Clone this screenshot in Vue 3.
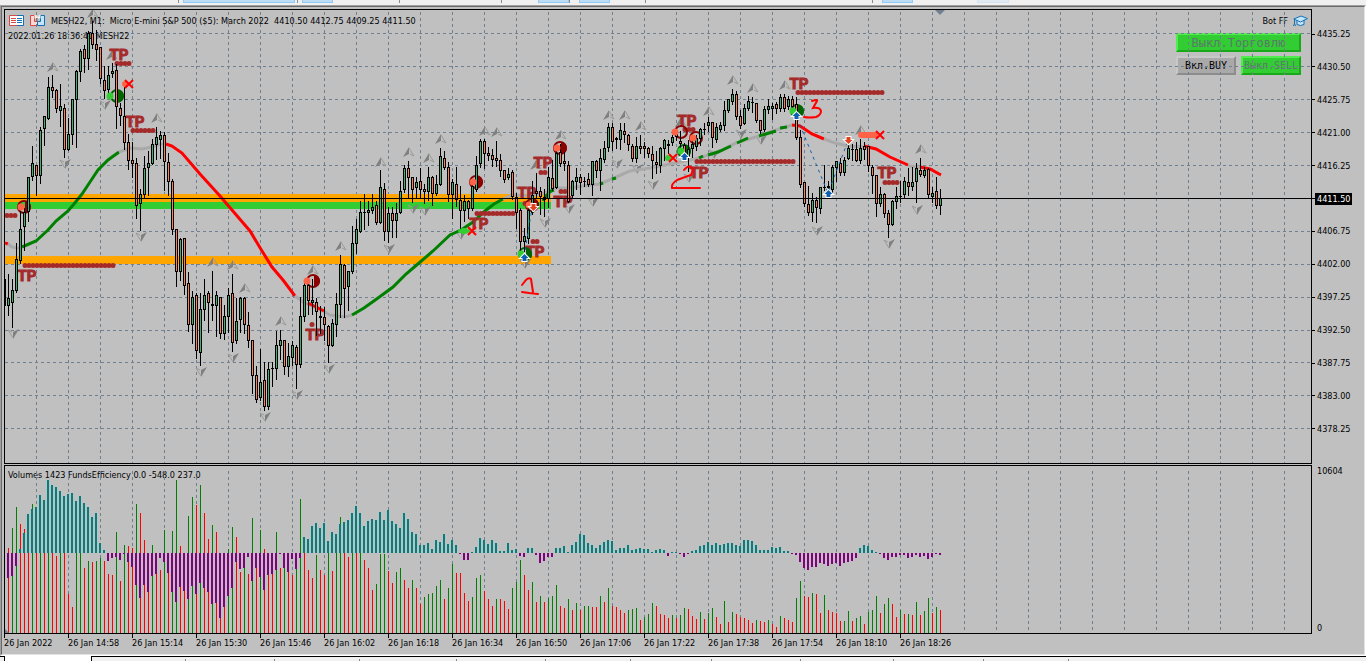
<script setup>
const STEP = 4
const FIRST_X = 8

// high, body top, body bottom, low, direction (u = up, d = down)
const candleData = `274 298 306 315 u,279 290 303 327 u,243 259 291 292 u,211 229 261 263 u,208 212 227 250 u,177 177 212 221 u,
146 163 177 180 u,165 165 176 195 d,127 130 176 183 u,116 116 129 145 u,77 87 119 119 u,75 87 91 97 d,89 90 109 112 d,
84 106 111 126 u,104 108 150 157 d,118 134 150 150 u,99 99 135 144 u,70 71 100 147 u,49 51 72 81 u,45 49 59 72 d,
31 33 59 69 u,21 33 45 48 d,30 44 50 60 d,47 47 79 83 d,66 80 91 98 d,66 75 90 93 u,63 71 74 77 u,64 70 107 128 d,
103 108 116 125 d,87 116 143 149 d,134 142 161 169 d,142 160 164 177 d,158 163 206 218 d,189 194 204 230 u,
156 168 195 197 u,151 163 168 195 u,139 144 164 164 u,127 137 145 159 u,131 135 140 158 u,132 135 162 190 d,
153 162 182 195 d,179 181 230 234 d,229 229 272 286 d,238 239 272 280 u,238 238 286 294 d,272 283 325 331 d,
291 297 325 343 u,293 295 351 358 d,293 309 353 365 u,279 295 310 320 u,291 293 303 332 d,271 304 306 320 d,
291 295 306 336 u,297 297 334 338 d,305 316 334 339 u,288 295 317 332 u,274 293 343 351 d,298 321 341 343 u,
297 298 320 332 u,297 298 325 333 d,312 325 341 347 d,340 340 376 393 d,366 375 400 402 d,349 382 398 400 u,
362 380 407 410 d,362 369 407 409 u,362 368 369 386 d,331 345 369 379 u,330 340 346 359 u,340 340 367 374 d,
343 356 367 376 u,341 345 358 365 u,345 347 365 388 d,297 316 365 367 u,283 285 317 321 u,283 285 301 314 d,
279 300 303 314 u,298 302 312 335 d,306 316 318 333 d,307 317 325 340 d,325 326 346 362 d,319 323 346 346 u,
293 304 325 336 u,255 264 305 317 u,264 265 289 317 d,271 271 287 310 u,226 243 272 273 u,219 229 244 253 u,
201 212 232 232 u,194 212 213 229 u,201 210 213 225 u,194 207 211 213 u,201 205 223 224 d,170 187 223 223 u,
183 189 232 240 d,207 213 232 242 u,207 213 221 237 d,203 213 221 237 u,181 191 213 213 u,165 168 190 192 u,
161 168 178 198 d,177 177 190 202 d,177 182 188 197 u,168 181 190 198 d,184 189 192 203 d,167 177 192 200 u,
176 177 194 205 d,175 184 194 195 u,148 156 185 185 u,151 158 168 169 d,162 167 195 201 d,179 182 195 218 u,
167 184 200 206 d,186 200 211 228 d,195 201 211 221 u,200 201 209 218 d,185 186 209 210 u,156 165 190 191 u,
139 141 164 167 u,139 141 154 168 d,147 153 156 160 d,149 155 160 166 d,141 158 161 166 d,154 160 171 176 d,
170 170 180 182 d,168 174 178 179 u,170 172 197 199 d,193 197 213 228 d,208 210 242 252 d,228 236 242 251 u,
208 210 239 243 u,181 195 213 214 u,173 191 194 197 d,187 191 197 214 d,189 197 200 216 d,167 177 199 207 u,
160 178 189 190 d,148 153 188 188 u,144 152 164 166 d,152 161 164 170 d,161 165 202 202 d,180 181 196 197 u,
168 177 182 189 u,174 177 183 194 d,177 181 182 186 d,173 179 185 186 d,161 161 185 195 u,160 161 171 177 d,
149 158 171 190 u,141 148 160 162 u,123 127 148 151 u,123 127 142 150 d,137 138 140 148 d,123 130 140 149 u,
123 131 135 142 d,134 135 145 150 d,144 146 159 161 d,137 146 159 162 u,135 146 149 153 d,142 146 149 157 d,
147 148 154 157 d,146 154 161 178 d,151 162 165 173 d,147 148 166 172 u,139 140 149 160 u,140 144 146 153 d,
135 137 143 145 u,132 133 137 140 d,131 141 144 148 d,143 145 157 160 d,140 149 157 171 u,141 144 149 157 u,
135 138 147 150 u,128 129 139 145 u,123 129 130 134 u,117 122 126 131 u,122 122 138 147 d,123 127 140 142 u,
122 125 130 131 u,101 110 126 130 u,99 99 111 112 u,89 94 102 104 u,91 94 117 119 d,110 116 126 128 d,
104 108 124 124 u,96 101 109 110 u,97 102 103 112 d,103 103 121 122 d,120 120 131 133 d,106 109 130 131 u,
99 106 110 113 u,103 106 109 119 u,102 104 109 113 d,94 97 109 111 u,94 97 109 111 d,96 99 107 109 u,96 99 107 109 d,
97 104 138 139 d,130 137 185 187 d,182 182 204 206 d,186 204 213 215 d,193 200 213 221 u,197 200 208 222 d,
187 187 209 213 u,165 187 188 190 d,181 186 188 194 d,165 167 190 194 u,161 161 168 181 u,158 163 173 175 d,
157 160 173 175 u,142 148 159 159 u,144 149 150 160 d,142 149 161 161 d,139 148 161 163 u,142 146 150 159 d,
146 146 166 171 d,165 167 176 193 d,175 175 204 216 d,187 194 204 206 u,193 194 214 217 d,210 213 225 237 d,
200 201 225 225 u,187 196 202 208 u,181 196 197 202 d,177 181 195 197 u,168 182 187 195 d,167 182 187 190 u,
163 168 182 202 u,158 170 175 176 d,167 170 176 177 u,168 169 195 198 d,187 193 197 202 u,177 191 206 208 d,
189 198 206 214 u`

const candles = candleData.split(',').map((row, i) => {
  const [h, t, b, l, d] = row.trim().split(' ')
  return { x: FIRST_X + i * STEP, h: +h, t: +t, b: +b, l: +l, up: d === 'u' }
})

// direction + volume level / efficiency level, three levels to a pixel
const volumeData = `r264/355 g204/348 g141/318 r192/267 r207/219 r279/162 g132/147 r279/141 g279/105 r279/120 g279/60 r279/75
r288/81 g279/93 r279/108 r402/102 r441/99 g279/123 g279/108 r324/129 g303/141 r306/171 g303/159 g294/249 r303/270
r342/303 r345/294 g216/291 r363/300 g255/282 r258/306 r264/321 g132/375 r159/414 r240/375 r396/396 g255/348 r342/342
r330/294 g210/306 r339/339 g213/396 g60/426 r258/381 r393/393 g168/417 g111/378 r135/402 g75/369 r159/384 r237/396
g195/432 r216/429 r474/474 r441/441 g267/408 g201/384 r231/306 r336/327 g324/324 r342/291 g174/363 r324/324 g210/351
r267/390 r345/345 r342/342 g216/330 r324/282 g324/324 r336/336 r345/297 g327/327 g117/294 r279/231 r330/237 r354/198
g285/189 r330/204 r345/189 g279/243 r333/216 g279/222 g171/192 r279/186 r291/180 g279/159 r279/138 g279/159 r300/198
r324/183 r390/177 g372/180 g282/156 g282/180 r333/150 r369/183 g336/192 g324/204 r360/159 r384/177 g360/216 r384/222
r432/255 g411/255 g402/249 g399/267 g378/240 g360/246 r417/222 g384/252 g312/240 r339/255 r339/282 r399/300 r423/300
g411/276 g354/261 g345/234 r393/240 r417/252 r438/240 g417/249 r417/273 r423/273 r447/249 g384/270 g366/267 g300/288
r345/291 r390/264 g366/264 r426/285 g408/309 r426/303 g414/291 g408/291 g375/264 r438/264 r444/258 g417/276 r450/255
g429/246 r450/222 g438/225 g438/249 r441/255 r441/264 g408/255 r426/246 g384/240 r438/243 r441/270 r450/264 r459/264
g450/255 g447/270 g444/267 r480/264 g471/267 g462/267 g429/276 r438/270 r462/267 r465/270 r474/288 g465/276 r474/276
g465/282 g444/291 r447/282 r468/273 r477/270 g456/258 r477/255 g459/246 g444/255 r471/249 r492/255 g423/252 r486/249
g456/249 r462/255 r471/258 r474/240 r480/240 r489/243 g480/255 r483/270 r486/270 g480/270 r492/261 r501/264 g468/261
r474/273 r480/273 r486/282 g414/285 g363/306 r408/324 r411/330 g399/321 r402/321 r459/309 g405/312 r450/318 r456/312
r459/309 r483/318 g483/309 g453/306 r483/303 g474/294 g468/264 r492/255 g456/258 g450/270 g408/276 r459/282 g432/294
g414/300 r432/291 r471/291 g450/285 r462/285 g462/294 r465/291 g426/285 r465/291 g453/288 g414/297 r459/291 g441/282
r450/285`

const ZERO = 279
const toY = (level) => 460 + Math.round(level / 3)
const volumes = volumeData.split(/\s+/).map((item, i) => {
  const [v, e] = item.slice(1).split('/').map(Number)
  return {
    x: FIRST_X + i * STEP,
    up: item[0] === 'g',
    top: toY(v),
    positive: e < ZERO,
    y: toY(Math.min(e, ZERO)),
    size: Math.max(1, toY(Math.max(e, ZERO)) - toY(Math.min(e, ZERO)))
  }
})

const title = 'MESH22, M1:  Micro E-mini S&P 500 ($5): March 2022  4410.50 4412.75 4409.25 4411.50'
const prices = ['4435.25', '4430.50', '4425.75', '4421.00', '4416.25', '4411.50', '4406.75', '4402.00', '4397.25', '4392.50', '4387.75', '4383.00', '4378.25']
const currentPrice = '4411.50'
const times = ['26 Jan 2022', '26 Jan 14:58', '26 Jan 15:14', '26 Jan 15:30', '26 Jan 15:46', '26 Jan 16:02', '26 Jan 16:18', '26 Jan 16:34', '26 Jan 16:50', '26 Jan 17:06', '26 Jan 17:22', '26 Jan 17:38', '26 Jan 17:54', '26 Jan 18:10', '26 Jan 18:26']

const gridX = Array.from({ length: 110 }, (_, i) => 36 + i * 32)
const gridY = [33, 66, 99, 132, 165, 198, 231, 264, 297, 330, 362, 395, 428]

const average = [
  ['red', '5,243 8,244'],
  ['flat', '8,244 12,247 17,248 22,248'],
  ['green', '22,247 36,241 48,230 56,221 68,211 74,204 82,194 90,182 98,170 108,160 119,152'],
  ['flat', '119,152 130,148 142,149 152,147 160,144 166,144'],
  ['red', '166,144 172,146 182,153 200,174 220,196 232,210 250,231 262,251 272,267 283,280 295,296'],
  ['flat', '295,296 303,302 325,312 330,315 345,317 352,315'],
  ['red', '308,303 324,311'],
  ['green', '352,315 364,308 378,298 393,287 406,274 419,263 433,251 450,235 461,230 473,222 485,211 494,204 503,199'],
  ['flat', '503,199 512,195 530,196 545,193 555,188 570,188 590,185 600,184 614,178 630,171 650,168 680,162 699,158 718,152 736,143 759,136 776,130 792,125'],
  ['green', '543,201 546,196 551,191 554,190'],
  ['green', '600,184 603,183'],
  ['green', '612,179 616,178'],
  ['green', '699,158 703,156'],
  ['green', '708,155 718,152 731,146'],
  ['green', '737,143 748,138'],
  ['green', '759,136 776,131'],
  ['green', '780,128 787,127'],
  ['red', '792,125 800,126 812,134 824,139'],
  ['flat', '824,139 835,143 848,146 864,147'],
  ['red', '864,146 876,149 890,157 908,165'],
  ['flat', '908,166 920,167'],
  ['red', '920,167 930,169 941,175']
]

const upMarks = [[53, 67], [93, 13], [112, 55], [157, 118], [213, 262], [233, 265], [245, 288], [281, 321], [313, 270], [341, 246], [381, 162], [409, 152], [429, 158], [441, 139], [485, 131], [497, 132], [536, 165], [561, 135], [609, 115], [625, 115], [641, 126], [681, 122], [709, 111], [733, 80], [753, 88], [785, 85], [861, 130], [921, 149]]
const downMarks = [[65, 164], [105, 105], [141, 237], [13, 334], [201, 372], [233, 358], [265, 417], [297, 395], [329, 369], [389, 249], [413, 209], [425, 211], [461, 235], [525, 264], [545, 223], [569, 209], [593, 202], [617, 164], [637, 169], [653, 185], [689, 178], [714, 154], [741, 134], [761, 140], [817, 231], [889, 244], [917, 210]]

const profitLabels = [[119, 60], [135, 127], [27, 281], [315, 340], [479, 229], [527, 198], [543, 168], [563, 207], [535, 257], [687, 126], [699, 178], [799, 89], [887, 178]]
// x start, y, x end
const profitDots = [[117, 63, 129], [133, 130, 153], [7, 215, 16], [25, 265, 113], [312, 324, 312], [477, 213, 513], [525, 203, 533], [541, 172, 545], [561, 191, 565], [533, 241, 537], [685, 129, 693], [697, 161, 793], [798, 92, 882], [885, 182, 897]]

const discs = [
  { x: 24, y: 207, ball: 21 }, { x: 313, y: 281, ball: 307 }, { x: 476, y: 182, ball: 473 },
  { x: 560, y: 148, ball: 557 }, { x: 532, y: 205, ball: 529 }, { x: 681, y: 132, ball: 675, open: true },
  { x: 696, y: 138, ball: 693, open: true }, { x: 117, y: 96, ball: 110, buy: true },
  { x: 525, y: 254, ball: 521, buy: true }, { x: 684, y: 151, ball: 681, buy: true }, { x: 797, y: 111, ball: 793, buy: true }
]
const crosses = [[129, 84], [472, 231], [673, 158], [880, 135]]
const deals = [[524, 258, 1], [684, 157, 1], [796, 116, 1], [828, 194, 1], [848, 140, 0], [533, 207, 0]]

const toolGroups = [[183, 111], [302, 30], [538, 30], [579, 30], [882, 30]]
const toolSeparators = [178, 297, 399, 501, 569, 645, 872]
const tabSeparators = [185, 274, 359, 456, 545, 630, 711, 800, 893, 983, 1068]
</script>

<template>
  <div class="terminal">
    <svg class="toolbar" aria-hidden="true">
      <rect v-for="g in toolGroups" :key="g[0]" class="tool" :x="g[0]" y="-3" :width="g[1]" height="5" />
      <rect class="tool faint" x="977" y="-3" width="31" height="5" />
      <rect v-for="s in toolSeparators" :key="s" class="separator" :x="s" y="0" width="1" height="3" />
    </svg>

    <main class="frame">
      <div class="chart">
        <div class="panes">
          <section class="pane price-pane">
            <header class="pane-header">
              <svg class="icon" width="16" height="12" viewBox="0 0 16 12" aria-hidden="true">
                <path d="M8 .5H.5v10H8" fill="#fff" stroke="#d84a42" />
                <path d="M8 .5h6.500v10H8" fill="#fff" stroke="#1370b4" />
                <path d="M2 3.500h5M2 5.500h5M2 7.500h5" stroke="#d84a42" />
                <path d="M8 3.500h5M8 5.500h5M8 7.500h5" stroke="#1370b4" />
              </svg>
              <svg class="icon" width="16" height="12" viewBox="0 0 16 12" aria-hidden="true">
                <path d="M.5.5h4v6h3v4h-7z" fill="#ffd8d4" stroke="#d84a42" />
                <path d="M7.500 10.500v-4h3v-6h4v10z" fill="#c5e6fa" stroke="#1370b4" />
                <path d="M5.500 0v2.500h4V0" fill="none" stroke="#eee" stroke-width="2" />
                <path d="M7.500 3v3" fill="none" stroke="#999" />
              </svg>
              <h1 class="title">{{ title }}</h1>
              <span class="bot">Bot FF</span>
              <svg class="icon cap" width="15" height="12" viewBox="0 0 15 12" aria-hidden="true">
                <path d="M4 5v4.500q3.500 2 7 0V5" fill="#c5e6fa" stroke="#1370b4" />
                <path d="M.8 4L8 1l6.500 2.500L7.500 7z" fill="#c5e6fa" stroke="#1370b4" />
                <path d="M1.500 4.500V9M.5 11l1-2.500 1 2.500" fill="none" stroke="#1370b4" />
              </svg>
            </header>
            <p class="clock">2022.01.26 18:36:41 MESH22</p>

            <div class="controls">
              <button type="button" class="trade on wide">Выкл.Торговлю</button>
              <button type="button" class="trade">Вкл.BUY</button>
              <button type="button" class="trade on">Выкл.SELL</button>
            </div>

            <svg class="plot" role="img" aria-label="MESH22 price chart">
              <g transform="translate(-5 -10)">
                <g class="grid">
                  <line v-for="x in gridX" :key="'x' + x" :x1="x + 0.5" y1="12" :x2="x + 0.5" y2="463" />
                  <line v-for="y in gridY" :key="'y' + y" x1="5" :y1="y + 0.5" x2="3600" :y2="y + 0.5" />
                </g>
                <g class="crisp">
                  <rect class="band-orange" x="5" y="194" width="546" height="8" />
                  <rect class="band-green" x="5" y="202" width="546" height="7" />
                  <rect class="band-orange" x="5" y="256" width="546" height="8" />
                </g>
                <g>
                  <g v-for="m in upMarks" :key="'u' + m[0]" :transform="`translate(${m[0]} ${m[1]})`">
                    <path class="mark-dark" d="M0-5L-6 5L0 2z" />
                    <path class="mark-light" d="M0-4L5 4L1 2" />
                  </g>
                  <g v-for="m in downMarks" :key="'d' + m[0]" :transform="`translate(${m[0]} ${m[1]})`">
                    <path class="mark-dark" d="M0 5L6-5L0-2z" />
                    <path class="mark-light" d="M0 4L-5-4L-1-2" />
                  </g>
                </g>
                <polyline v-for="(a, i) in average" :key="'a' + i" :class="['average', a[0]]" :points="a[1]" />
                <g>
                  <text v-for="(p, i) in profitLabels" :key="'p' + i" class="profit" :x="p[0]" :y="p[1]">TP</text>
                  <line v-for="(p, i) in profitDots" :key="'l' + i" class="profit-dots" :x1="p[0]" :y1="p[1] + 0.5" :x2="p[2] + 0.1" :y2="p[1] + 0.5" />
                </g>
                <g v-for="(d, i) in discs" :key="'c' + i" :class="d.buy ? 'buy' : 'sell'" :transform="`translate(${d.x} ${d.y})`">
                  <circle class="ring" r="6" />
                  <path v-if="!d.open" class="half" d="M1-6A6 6 0 0 1 1 6z" />
                </g>
                <g class="crisp">
                  <rect x="5" y="279" width="1" height="27" />
                  <g v-for="c in candles" :key="c.x">
                    <rect :x="c.x" :y="c.h" width="1" :height="c.l - c.h + 1" />
                    <rect :x="c.x - 1" :y="c.t" width="3" :height="c.b - c.t" />
                    <rect v-if="c.b - c.t > 2" :class="c.up ? 'rise' : 'fall'" :x="c.x" :y="c.t + 1" width="1" :height="c.b - c.t - 2" />
                  </g>
                  <rect x="5" y="198" width="3600" height="1" />
                </g>
                <circle v-for="(d, i) in discs" :key="'b' + i" :class="d.buy ? 'ball-buy' : 'ball-sell'" :cx="d.ball" :cy="d.y" r="3.500" />
                <ellipse class="ball-buy" cx="464" cy="231" rx="6" ry="3" />
                <circle class="ball-buy" cx="668" cy="158" r="3" />
                <circle class="ball-sell" cx="125" cy="84" r="3" />
                <rect class="ball-sell" x="858" y="132" width="20" height="6" rx="3" />
                <path v-for="(c, i) in crosses" :key="'k' + i" class="cross" :d="`M${c[0] - 4} ${c[1] - 4}l8 8m0-8l-8 8`" />
                <path class="deal-line" d="M797 118L828 193L848 141M524 257L532 208" />
                <g v-for="(d, i) in deals" :key="'e' + i" :transform="`translate(${d[0] + 0.5} ${d[1]})`">
                  <path class="deal" :fill="d[2] ? '#0b5fb0' : '#e0401c'" :d="d[2] ? 'M0-4L4 0H2V3H-2V0H-4z' : 'M0 4L4 0H2V-3H-2V0H-4z'" />
                </g>
                <g class="note">
                  <path d="M522 285L526 280Q529 277 531 279L533 292M522 292L529 293L538 294" />
                  <path d="M684 170Q688 165 691 167Q694 169 691 175L677 180Q671 184 672 188H700" />
                  <path d="M812 101Q818 99 817 101L813 108Q820 107 821 111Q821 115 816 117Q809 118 804 117" />
                </g>
                <path d="M935 10h10l-5 5z" fill="#708090" />
              </g>
            </svg>
          </section>

          <section class="pane volume-pane">
            <h2 class="title volume-title">Volumes 1423 FundsEfficiency 0.0 -548.0 237.0</h2>
            <svg class="plot" role="img" aria-label="Volumes and funds efficiency">
              <g transform="translate(-5 -466)">
                <g class="grid">
                  <line v-for="x in gridX" :key="x" :x1="x + 0.5" y1="471" :x2="x + 0.5" y2="633" />
                </g>
                <g class="crisp">
                  <rect v-for="v in volumes" :key="'v' + v.x" :class="v.up ? 'vol-up' : 'vol-down'" :x="v.x" :y="v.top" width="1" :height="633 - v.top" />
                  <rect v-for="v in volumes" :key="'e' + v.x" :class="v.positive ? 'eff-up' : 'eff-down'" :x="v.x - 1" :y="v.y" width="2" :height="v.size" />
                </g>
                <path d="M5 629L9 633H5z" fill="#708090" />
              </g>
            </svg>
          </section>

          <ol class="times">
            <li v-for="t in times" :key="t">{{ t }}</li>
          </ol>
        </div>

        <aside class="scales">
          <ol class="prices">
            <li v-for="p in prices" :key="p"><span :class="{ current: p === currentPrice }">{{ p }}</span></li>
          </ol>
          <ol class="volume-scale">
            <li>10604</li>
            <li>0</li>
          </ol>
        </aside>
      </div>
    </main>

    <svg class="tabs" aria-hidden="true">
      <rect x="5" y="0" width="87" height="20" fill="#fff" />
      <path d="M4.500 0V20M0 .5H5M91.500 20V.5H3600" fill="none" stroke="#000" />
      <rect v-for="s in tabSeparators" :key="s" class="separator" :x="s" y="3" width="1" height="12" />
    </svg>
  </div>
</template>

<style>
body {
  margin: 0;
  background: #f0f0f0;
}
</style>

<style scoped>
.terminal {
  display: flex;
  flex-direction: column;
  height: 100vh;
  overflow: hidden;
  background: #f0f0f0;
  color: #000;
  font-family: "DejaVu Sans Condensed", "DejaVu Sans", sans-serif;
  font-size: 9px;
  line-height: 12px;
}
.toolbar {
  display: block;
  flex: none;
  width: 100%;
  height: 5px;
  shape-rendering: crispEdges;
}
.tool {
  fill: #bcdcf4;
  stroke: #90c8f6;
}
.faint {
  opacity: 0.3;
}
.separator {
  fill: #8a8a8a;
}
.frame {
  flex: none;
  border: 1px solid #a0a0a0;
  border-right-color: #fff;
  border-bottom-color: #fff;
}
.chart {
  display: flex;
  padding: 2px 0 0 2px;
  border: 1px solid #696969;
  border-right-color: #e3e3e3;
  border-bottom-color: #e3e3e3;
  background: #c0c0c0;
}
.panes {
  flex: 1;
  min-width: 0;
}
.pane {
  position: relative;
  box-sizing: border-box;
  border: 1px solid #000;
  overflow: hidden;
}
.price-pane {
  height: 455px;
}
.volume-pane {
  height: 169px;
  margin-top: 1px;
}
.plot {
  position: absolute;
  inset: 0;
  width: 100%;
  height: 100%;
  pointer-events: none;
}
.pane-header {
  display: flex;
  align-items: center;
  gap: 5px;
  padding: 5px 3px 0 4px;
}
.icon {
  flex: none;
}
.title {
  flex: 1;
  margin: 0;
  font-size: 9px;
  font-weight: normal;
  white-space: pre;
}
.volume-title {
  padding: 3px;
}
.clock {
  margin: 3px 0 0 3px;
}
.controls {
  position: absolute;
  top: 23px;
  right: 10px;
  display: grid;
  grid-template-columns: 60px 60px;
  gap: 4px 5px;
}
.trade {
  height: 19px;
  padding: 0;
  border: 2px solid;
  border-color: #c8c8c8 #8c8c8c #8c8c8c #c8c8c8;
  background: #a9a9a9;
  color: #000;
  font-family: "DejaVu Sans Mono", monospace;
  font-size: 10px;
  line-height: 14px;
  white-space: nowrap;
}
.trade.on {
  border-color: #50ec50 #18a818 #18a818 #50ec50;
  background: #32cd32;
  color: #5a7a6a;
}
.trade.wide {
  grid-column: span 2;
  font-size: 12px;
}
.grid line {
  stroke: #708090;
  stroke-dasharray: 3 3;
  shape-rendering: crispEdges;
}
.crisp {
  shape-rendering: crispEdges;
}
.band-orange {
  fill: #ffa500;
}
.band-green {
  fill: #32cd32;
}
.mark-dark {
  fill: #808080;
}
.mark-light {
  fill: none;
  stroke: #9a9a94;
}
.average {
  fill: none;
  stroke-width: 3;
}
.average.red {
  stroke: #f00;
}
.average.green {
  stroke: #008000;
}
.average.flat {
  stroke: #a9a9a9;
}
.profit {
  fill: #a52a2a;
  stroke: #a52a2a;
  font-family: "Roboto", "Liberation Sans", sans-serif;
  font-size: 15px;
  font-weight: bold;
  text-anchor: middle;
}
.profit-dots {
  stroke: #a52a2a;
  stroke-width: 5;
  stroke-linecap: round;
  stroke-dasharray: 0 4;
}
.ring {
  fill: none;
  stroke-width: 2;
}
.sell .ring {
  stroke: #8b0000;
}
.sell .half {
  fill: #8b0000;
}
.buy .ring {
  stroke: #006400;
}
.buy .half {
  fill: #006400;
}
.ball-sell {
  fill: #ff6347;
}
.ball-buy {
  fill: #32cd32;
}
.rise {
  fill: #3cb371;
}
.fall {
  fill: #ff7f50;
}
.cross {
  fill: none;
  stroke: #f00;
  stroke-width: 2;
}
.deal-line {
  fill: none;
  stroke: #0b5fb0;
  stroke-dasharray: 3 4;
}
.deal {
  stroke: #fff;
  stroke-width: 2;
  paint-order: stroke;
}
.note path {
  fill: none;
  stroke: #f00;
  stroke-width: 2;
  stroke-linecap: round;
}
.vol-up {
  fill: #008000;
}
.vol-down {
  fill: #f00;
}
.eff-up {
  fill: #008080;
}
.eff-down {
  fill: #800080;
}
.times,
.prices,
.volume-scale {
  margin: 0;
  padding: 0;
  list-style: none;
}
.times {
  display: flex;
  height: 20px;
}
.times li {
  flex: none;
  width: 64px;
  line-height: 11px;
  white-space: nowrap;
}
.times li::before {
  content: "";
  display: block;
  width: 1px;
  height: 4px;
  background: #000;
}
.scales {
  flex: none;
  width: 52px;
}
.prices {
  display: flex;
  flex-direction: column;
  justify-content: space-between;
  box-sizing: border-box;
  height: 456px;
  padding: 19px 0 30px;
}
.prices li {
  display: flex;
  align-items: center;
  height: 12px;
}
.prices li::before {
  content: "";
  width: 3px;
  height: 1px;
  background: #000;
}
.prices span {
  padding: 0 2px;
}
.prices .current {
  background: #000;
  color: #fff;
}
.volume-scale {
  display: flex;
  flex-direction: column;
  justify-content: space-between;
  height: 169px;
  padding-left: 5px;
}
.tabs {
  display: block;
  flex: 1;
  width: 100%;
  min-height: 5px;
  shape-rendering: crispEdges;
}
</style>
